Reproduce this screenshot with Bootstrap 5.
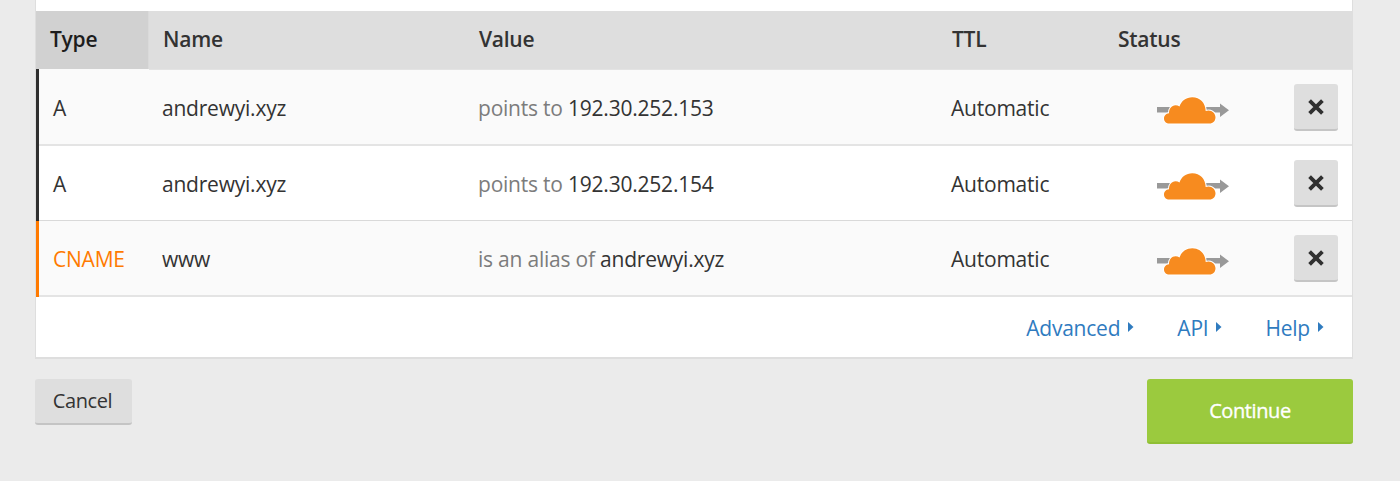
<!DOCTYPE html>
<html lang="en">
<head>
<meta charset="utf-8">
<meta name="viewport" content="width=device-width, initial-scale=1">
<title>DNS records</title>
<link href="https://cdn.jsdelivr.net/npm/bootstrap@5.3.0/dist/css/bootstrap.min.css" rel="stylesheet">
<style>
body{background:#ebebeb;color:#333;font-family:"Open Sans",sans-serif;font-size:21px;letter-spacing:-.22px;line-height:28px;overflow:hidden}
.page-wrap{padding:0 47px 0 35px}
.dns-panel{border:solid #dedede;border-width:0 1px 2px;padding-top:11px;height:359px}
.dns-table{table-layout:fixed;border-collapse:separate;border-spacing:0;width:100%}
.dns-table th{height:58px;padding:0 0 2px 14px;background:#dedede;font-size:21px;letter-spacing:-.25px;font-weight:600;vertical-align:middle}
.dns-table th.sorted{background:#d1d1d1;color:#1d1d1d;border-right:1px solid #dadada}
.dns-table th.th-ttl{padding-left:15px}
.dns-table th.th-status{padding-left:14px}
.dns-table td{--line:#e4e4e4;--line-w:2px;height:77px;padding:2px 0 0 13px;border-bottom:var(--line-w) solid var(--line);vertical-align:middle;white-space:nowrap}
.dns-table tr.mid td{--line:#d9d9d9;--line-w:1px;height:75px}
.dns-table tbody tr:nth-child(odd){background:#fafafa}
.dns-table tbody tr:first-child td:not(.kind){box-shadow:inset 0 1px #e3e3e3}
.dns-table tr:last-child td{height:76px}
.dns-table td.ttl{padding-left:14px}
.dns-table td.kind{--bar:#2f2f2f;padding-left:17px;padding-bottom:var(--line-w);border-bottom:0;background:linear-gradient(var(--bar),var(--bar)) 0 0/3px 100% no-repeat,linear-gradient(var(--line),var(--line)) 0 100%/100% var(--line-w) no-repeat}
.dns-table td.kind-cname{--bar:#ff7a00;color:#ff7a00}
.dns-table td.status{padding:8px 0 0 53px}
.dns-table td.act{padding:1px 0 0}
.dns-table tr:first-child td.act{padding-top:2px}
.verb{color:#7c7c7c}
.cloud-icon{display:block;width:72px;height:30px}
.btn-remove{display:block;width:44px;height:47px;padding:0;border:0;border-bottom:2px solid #c5c5c5;border-radius:3px;background:#dedede}
.btn-remove svg{display:block;margin:0 auto}
.panel-links{height:60px;padding:1px 28px 0 0;gap:43px}
.panel-links a{color:#2f7bbf;text-decoration:none}
.panel-links svg{width:6px;height:10px;margin-left:8px;margin-bottom:5px}
.panel-actions{padding-top:20px}
.btn-cancel{width:97px;height:46px;padding:0 2px 1px 0;border:0;border-bottom:2px solid #c4c4c4;border-radius:3px;background:#dedede;color:#333;font-size:20px;letter-spacing:-.4px;line-height:43px}
.btn-continue{width:206px;height:65px;padding:0;border:0;border-bottom:2px solid #8fbf34;border-radius:3px;background:#9bca3e;color:#fff;font-size:20px;letter-spacing:-.4px;line-height:62px;-webkit-text-stroke:.35px #fff}
</style>
</head>
<body>
<svg class="d-none" xmlns="http://www.w3.org/2000/svg">
<symbol id="cloud" viewBox="0 0 72 30">
<path fill="#999" d="M0 11h63V7.500l9 6.700-9 6.800v-4.500H0z"/>
<path d="M12 27.500C9 27.500 7 25.300 7 22.500C7 19.900 9 17.500 12 17.300C11.800 13 14.500 9.300 18.500 9.300C20 9.300 21.300 9.700 22.500 10.500C24.300 5 29.200 1.300 35.300 1.300C43 1.300 48.500 7 48.700 15C53.500 13 58.500 16.500 58.500 21.200C58.500 25 56 27.500 52.500 27.500Z" fill="#f78b1f" stroke="#fff" stroke-width="2" paint-order="stroke"/>
</symbol>
<symbol id="cross" viewBox="0 0 16 16"><path d="M2.300 2.300l11.400 11.400m0-11.400l-11.400 11.400" stroke="#303030" stroke-width="3.400" fill="none"/></symbol>
<symbol id="caret" viewBox="0 0 6 10"><path d="M0 0l5.500 5-5.500 5z" fill="#2f7bbf"/></symbol>
</svg>
<main class="page-wrap">
<section class="dns-panel bg-white">
<table class="dns-table">
<colgroup><col style="width:113px"><col style="width:316px"><col style="width:472px"><col style="width:167px"><col style="width:190px"><col></colgroup>
<thead><tr><th class="sorted">Type</th><th>Name</th><th>Value</th><th class="th-ttl">TTL</th><th class="th-status">Status</th><th></th></tr></thead>
<tbody>
<tr><td class="kind">A</td><td>andrewyi.xyz</td><td><span class="verb">points to</span> 192.30.252.153</td><td class="ttl">Automatic</td><td class="status"><svg class="cloud-icon"><use href="#cloud"/></svg></td><td class="act"><button class="btn btn-remove" aria-label="Delete"><svg width="18" height="18"><use href="#cross"/></svg></button></td></tr>
<tr class="mid"><td class="kind">A</td><td>andrewyi.xyz</td><td><span class="verb">points to</span> 192.30.252.154</td><td class="ttl">Automatic</td><td class="status"><svg class="cloud-icon"><use href="#cloud"/></svg></td><td class="act"><button class="btn btn-remove" aria-label="Delete"><svg width="18" height="18"><use href="#cross"/></svg></button></td></tr>
<tr><td class="kind kind-cname">CNAME</td><td>www</td><td><span class="verb">is an alias of</span> andrewyi.xyz</td><td class="ttl">Automatic</td><td class="status"><svg class="cloud-icon"><use href="#cloud"/></svg></td><td class="act"><button class="btn btn-remove" aria-label="Delete"><svg width="18" height="18"><use href="#cross"/></svg></button></td></tr>
</tbody>
</table>
<nav class="panel-links d-flex justify-content-end align-items-center">
<a href="#">Advanced<svg><use href="#caret"/></svg></a><a href="#">API<svg><use href="#caret"/></svg></a><a href="#">Help<svg><use href="#caret"/></svg></a>
</nav>
</section>
<div class="panel-actions d-flex justify-content-between align-items-start"><button class="btn btn-cancel">Cancel</button><button class="btn btn-continue">Continue</button></div>
</main>
<script src="https://cdn.jsdelivr.net/npm/bootstrap@5.3.0/dist/js/bootstrap.bundle.min.js"></script>
</body>
</html>
